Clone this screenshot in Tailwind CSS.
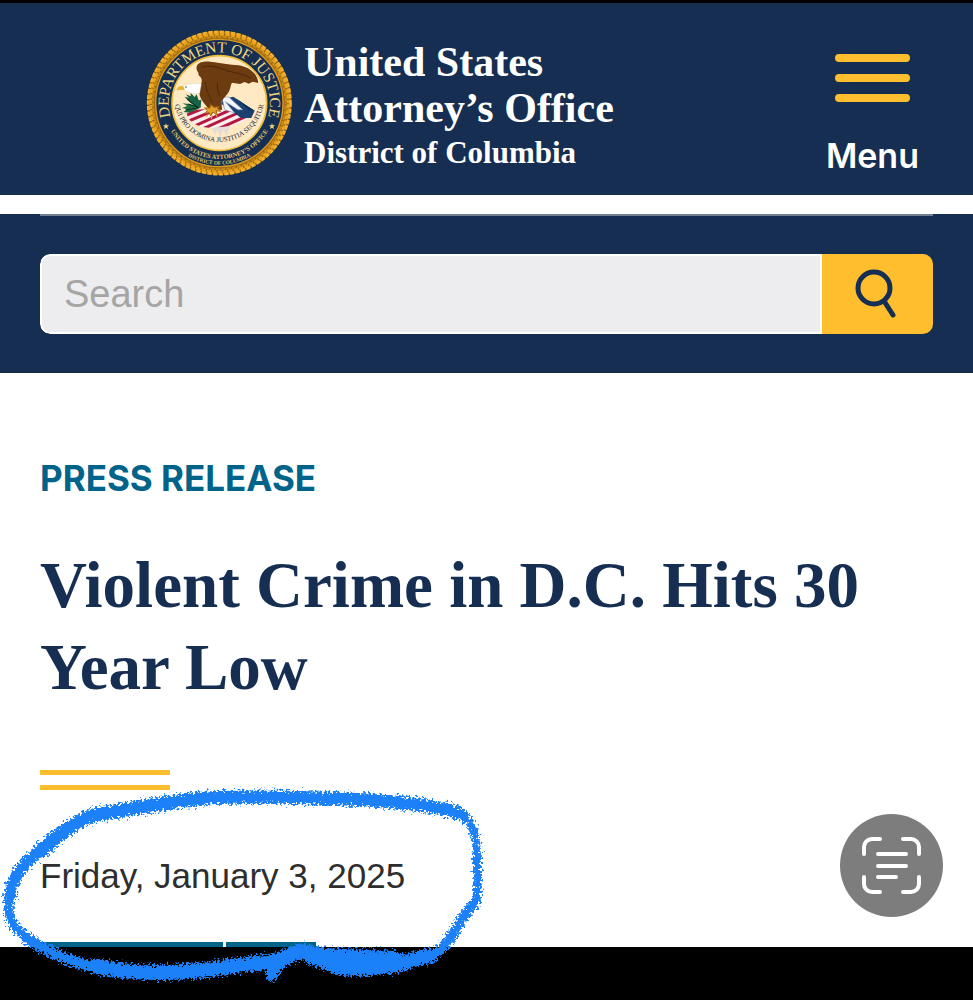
<!DOCTYPE html>
<html lang="en">
<head>
<meta charset="utf-8">
<meta name="viewport" content="width=device-width, initial-scale=1">
<title>Violent Crime in D.C. Hits 30 Year Low</title>
<script src="https://cdn.jsdelivr.net/npm/@tailwindcss/browser@4"></script>
</head>
<body class="flex min-h-screen flex-col bg-black font-['Liberation_Sans',sans-serif] text-[#2e2e2e]">
<header class="mt-[3px]">
  <div class="flex h-48 items-start justify-between bg-[#162e51] pr-[54px] pl-[140px]">
    <a href="#" class="flex items-start gap-1 text-white">
      <svg class="mt-[19px] size-40 shrink-0" viewBox="0 0 480 480" role="img" aria-label="Department of Justice seal">
        <defs>
          <path id="arcTopText" d="M120.5 339.4A152 152 0 1 1 355.5 339.4"/>
          <path id="arcMotto" d="M103 225a135 135 0 1 0 270 0"/>
          <path id="arcOffice" d="M70 243a168 168 0 0 0 336 0"/>
          <path id="arcDistrict" d="M53 243a185 185 0 0 0 370 0"/>
          <clipPath id="shieldClip"><path d="M140 272C180 255 250 262 345 268C325 300 275 318 225 318C180 318 145 305 140 272Z"/></clipPath>
        </defs>
        <circle cx="238" cy="243" r="203" fill="#6d4a10" stroke="#a06a12" stroke-width="26"/>
        <circle cx="238" cy="243" r="213" fill="none" stroke="#efae2b" stroke-width="9" stroke-dasharray="13 4"/>
        <circle cx="238" cy="243" r="206" fill="none" stroke="#e9a31c" stroke-width="8" stroke-dasharray="12.6 3.8" stroke-dashoffset="-4"/>
        <circle cx="238" cy="243" r="199" fill="none" stroke="#c98a18" stroke-width="6" stroke-dasharray="12.2 3.7" stroke-dashoffset="-8"/>
        <circle cx="238" cy="243" r="191" fill="#162e51" stroke="#d79a22" stroke-width="4"/>
        <circle cx="238" cy="243" r="142" fill="#fee9c3" stroke="#edbd3a" stroke-width="5"/>
        <g font-family="Liberation Serif, serif" text-anchor="middle">
          <text font-size="46" fill="#efd780"><textPath href="#arcTopText" startOffset="50%">DEPARTMENT OF JUSTICE</textPath></text>
          <text font-size="21" fill="#14263f"><textPath href="#arcMotto" startOffset="50%">QUI PRO DOMINA JUSTITIA SEQUITUR</textPath></text>
          <text font-size="19" font-weight="bold" fill="#e3c766"><textPath href="#arcOffice" startOffset="50%">UNITED STATES ATTORNEY’S OFFICE</textPath></text>
          <text font-size="16" font-weight="bold" fill="#e3c766"><textPath href="#arcDistrict" startOffset="50%">DISTRICT OF COLUMBIA</textPath></text>
        </g>
        <path d="M78 303l2 7h7l-5 4 2 7-6-4-6 4 2-7-5-4h7zM396 303l2 7h7l-5 4 2 7-6-4-6 4 2-7-5-4h7z" fill="#efd780"/>
        <g clip-path="url(#shieldClip)">
          <rect x="135" y="250" width="215" height="75" fill="#f7eef0"/>
          <path d="M125 285L205 253M130 304L240 258M150 318L275 262M185 322L300 270M225 325L330 278" stroke="#b5173f" stroke-width="9"/>
        </g>
        <path d="M215 318l10 22 8-18 8 26 9-26 10 20 10-30z" fill="#e3dcd8"/>
        <path d="M245 232l35-8 64 42-10 22-30 0-60-42z" fill="#1c4170"/>
        <path d="M246 226l20-1 42 38-14 0-38-24 28 34-30-10z" fill="#f4f6fa" stroke="#8aa0bd" stroke-width="2"/>
        <path d="M290 230l22 16 32 20-18-2z" fill="#0f2e58"/>
        <path d="M175 152C163 136 172 120 192 119C216 117 240 126 276 128C305 128 328 137 342 153C350 162 354 172 355 183L338 179L326 185L314 180L300 186L276 182C270 192 272 204 262 216L244 238L246 264L228 262L214 278L204 258C190 240 176 228 178 205C181 185 194 175 176 160Z" fill="#6d3b10"/>
        <path d="M188 135c22-6 42 0 64 8 28 10 54 10 82 26M196 180c2 25 12 45 22 62M232 184c0 18 2 28 8 38" fill="none" stroke="#4d270a" stroke-width="3"/>
        <path d="M184 186C162 182 140 187 126 194L134 206C150 212 164 218 179 214Z" fill="#fff" stroke="#cfc8bb" stroke-width="1"/>
        <path d="M130 193c-12-3-20 2-20 13 8-3 16-1 24-2z" fill="#e8b63f"/>
        <circle cx="138" cy="195" r="2" fill="#222"/>
        <path d="M178 258c-12-4-28-14-44-34l12 3-8-10 14 6 0-10 12 12 6-8 6 18 8-2-2 24z" fill="#176245"/>
        <path d="M180 258l-30 14-20-2 12-8-16-4 16-6-14-8 20 2z" fill="#1d6a3f"/>
        <path d="M140 230l36 28M136 264l38-6M145 246l30 10" stroke="#082e25" stroke-width="3"/>
        <path d="M194 258l8 8-6 8 12-2 4 10 6-12 14 10-4-14 14 2-10-10 6-4-16 2-10-8-2 10z" fill="#e0a02a" stroke="#a8640f" stroke-width="3"/>
        <path d="M198 286l8-10M214 292l2-12M234 288l-8-12" stroke="#e5a526" stroke-width="3"/>
      </svg>
      <span class="flex flex-col pt-9 font-['Liberation_Serif',serif] font-bold">
        <span class="text-[42px] leading-[46px]">United States<br>Attorney’s Office</span>
        <span class="text-[31px] leading-[44px]">District of Columbia</span>
      </span>
    </a>
    <button type="button" class="mt-[51px] flex flex-col items-center text-white">
      <svg class="h-12 w-[75px]" viewBox="0 0 75 48" fill="none" stroke="#ffbe2e" stroke-width="8" stroke-linecap="round" aria-hidden="true"><path d="M4 4h67M4 24h67M4 44h67"/></svg>
      <span class="mt-8 font-['Inter',sans-serif] text-[34px] leading-[44px] font-semibold">Menu</span>
    </button>
  </div>
  <div class="h-[19px] bg-white"></div>
  <div class="h-[159px] bg-[#162e51] px-10">
    <div class="h-[2px] bg-[#71808f]"></div>
    <form class="mt-[38px] flex h-[80px] overflow-hidden rounded-[10px]" role="search">
      <input id="q" type="text" aria-label="Search" placeholder="Search" class="min-w-0 flex-1 rounded-l-[10px] border-2 border-white bg-[#ededef] px-[22px] text-[38px] leading-[48px] outline-none placeholder:text-[#a5a5a5]">
      <button type="submit" aria-label="Search" class="flex w-[111px] items-center justify-center bg-[#ffbe2e]">
        <svg class="size-[50px]" viewBox="0 0 50 50" fill="none" stroke="#162e51" stroke-width="5" stroke-linecap="round" aria-hidden="true"><circle cx="21" cy="19" r="16"/><path d="M31 32l9 14"/></svg>
      </button>
    </form>
  </div>
</header>
<main class="relative flex h-[574px] flex-col bg-white px-10">
  <p class="mt-[83px] font-['Inter',sans-serif] text-[35px] leading-[44px] font-bold text-[#00638a]">PRESS RELEASE</p>
  <h1 class="mt-11 font-['Liberation_Serif',serif] text-[65px] leading-[82px] font-bold text-[#162e51]">Violent Crime in D.C. Hits 30 Year Low</h1>
  <div class="mt-[62px] h-5 w-[130px] border-y-5 border-[#ffbe2e]"></div>
  <p class="mt-[64px] text-[35px] leading-[44px]"><time datetime="2025-01-03">Friday, January 3, 2025</time></p>
  <div class="mt-auto flex h-[5px] gap-[3px]"><span class="w-[183px] bg-[#00638a]"></span><span class="w-[90px] bg-[#00638a]"></span></div>

  <!-- Crayon circle around the date -->
  <svg class="pointer-events-none absolute top-[407px] left-0 h-[220px] w-[500px]" viewBox="0 780 500 220" fill="none" stroke="#1a80f8" stroke-linecap="round" stroke-linejoin="round" aria-hidden="true">
    <defs>
      <filter id="crayon" x="-5%" y="-10%" width="110%" height="120%">
        <feTurbulence type="fractalNoise" baseFrequency="0.45" numOctaves="3" seed="4" result="n"/>
        <feDisplacementMap in="SourceGraphic" in2="n" scale="12" xChannelSelector="R" yChannelSelector="G"/>
      </filter>
    </defs>
    <g filter="url(#crayon)">
      <path stroke-width="13" d="M190 799C240 795 330 798 370 800C410 803 445 807 460 814"/>
      <path stroke-width="14" d="M200 799C165 802 130 809 95 815C75 821 60 834 42 850"/>
      <path stroke-width="12" d="M42 850C24 861 11 878 10 898"/>
      <path stroke-width="9" d="M16 875C9 885 8 894 9 905C8 920 14 928 28 938"/>
      <path stroke-width="8" d="M460 814C475 822 477 840 477 860C477 880 479 900 474 906"/>
      <path stroke-width="10" d="M474 904C463 914 458 928 446 944C440 952 430 958 414 961"/>
      <path stroke-width="11" d="M26 938C50 954 78 964 102 969"/>
      <path stroke-width="15" d="M95 966C130 974 180 975 225 967C250 962 270 966 288 956C300 948 315 954 325 962C350 976 390 964 430 956"/>
      <path stroke-width="12" d="M272 975C278 960 290 950 303 950C325 957 370 955 395 957"/>
      <path stroke-width="12" d="M310 958Q335 969 365 969T414 961"/>
      <path stroke-width="6" d="M278 968L271 979"/>
    </g>
  </svg>

  <button type="button" aria-label="Scan text" class="absolute top-[441px] right-[30px] size-[103px] rounded-full bg-[#7d7d7d]">
    <svg class="size-full" viewBox="0 0 103 103" fill="none" stroke="#fff" stroke-width="4" stroke-linecap="round" stroke-linejoin="round" aria-hidden="true"><path d="M24 40v-7a8 8 0 0 1 8-8h8M63 25h8a8 8 0 0 1 8 8v7M79 63v7a8 8 0 0 1-8 8h-8M40 78h-8a8 8 0 0 1-8-8v-7M38 40h28M38 52h28M38 63h18"/></svg>
  </button>
</main>
</body>
</html>
